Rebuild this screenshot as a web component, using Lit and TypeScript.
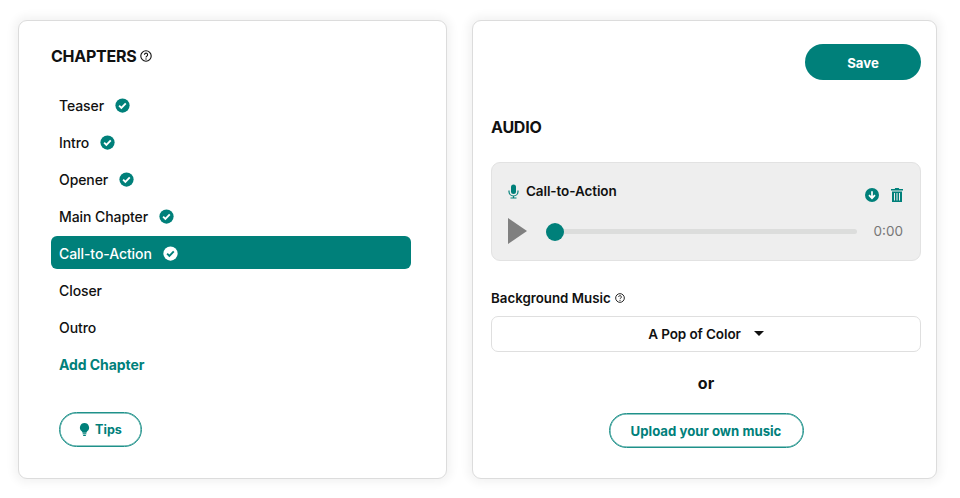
import { LitElement, html, css, svg } from 'lit';
import { customElement } from 'lit/decorators.js';

const chapters = ['Teaser', 'Intro', 'Opener', 'Main Chapter', 'Call-to-Action', 'Closer', 'Outro'];
const ACTIVE = 'Call-to-Action';

const check = html`<svg class="check" viewBox="0 0 16 16">
  <circle cx="8" cy="8" r="7.6" fill="currentColor"></circle>
  <path class="tick" d="M4.4 8.2l2.4 2.4 4.7-4.8" fill="none" stroke-width="2"></path>
</svg>`;

const help = (size: number) => html`<svg width=${size} height=${size} viewBox="0 0 12 12" fill="none" stroke="#111">
  <circle cx="6" cy="6" r="5.2" stroke-width="1.1"></circle>
  <path d="M4.4 4.8a1.6 1.6 0 1 1 2.5 1.3c-.6.4-.9.7-.9 1.3" stroke-width="1.1"></path>
  ${svg`<circle cx="6" cy="9" r=".7" fill="#111" stroke="none"></circle>`}
</svg>`;

@customElement('app-root')
export class AppRoot extends LitElement {
  static styles = css`
    :host {
      display: block;
      width: 960px;
      height: 498px;
      background: #fff;
      font-family: Inter, "Liberation Sans", sans-serif;
      color: #111;
      overflow: hidden;
    }
    .page {
      display: flex;
      gap: 25px;
      padding: 20px 0 0 18px;
    }
    .card {
      box-sizing: border-box;
      height: 459px;
      background: #fff;
      border: 1px solid #dcdcdc;
      border-radius: 9px;
      box-shadow: 0 0 10px 4px rgba(0, 0, 0, 0.05);
    }
    .left {
      width: 429px;
      padding: 25px 35px 0 32px;
    }
    .right {
      width: 465px;
      padding: 23px 15px 0 18px;
    }
    h2 {
      margin: 0;
      display: flex;
      align-items: center;
      gap: 4px;
      font-size: 16px;
      line-height: 20px;
      font-weight: 700;
      letter-spacing: -0.25px;
    }
    ul {
      list-style: none;
      margin: 22px 0 0;
      padding: 0;
      display: flex;
      flex-direction: column;
      gap: 4px;
    }
    li {
      box-sizing: border-box;
      height: 33px;
      display: flex;
      align-items: center;
      gap: 11px;
      padding: 1px 0 0 8px;
      border-radius: 6px;
      font-size: 14px;
      font-weight: 500;
      letter-spacing: -0.08px;
      color: #111;
    }
    li .check {
      color: #00807a;
    }
    li .tick {
      stroke: #fff;
    }
    li.active {
      background: #00807a;
      color: #fff;
    }
    li.active .check {
      color: #fff;
    }
    li.active .tick {
      stroke: #00807a;
    }
    li.add {
      color: #00807a;
      font-weight: 700;
    }
    .check {
      width: 15px;
      height: 15px;
      flex: none;
    }
    .outline {
      box-sizing: border-box;
      display: inline-flex;
      align-items: center;
      justify-content: center;
      background: #fff;
      border: 1px solid #1f918a;
      box-shadow: inset 0 0 0 0.5px #1f918a;
      border-radius: 18px;
      color: #00807a;
      font: 700 13.2px Inter, "Liberation Sans", sans-serif;
      padding: 0;
    }
    .tips {
      width: 83px;
      height: 35px;
      gap: 5px;
      margin: 32px 0 0 8px;
      font-size: 12.6px;
    }
    .save-row {
      display: flex;
      justify-content: flex-end;
    }
    .save {
      width: 116px;
      height: 36px;
      border: none;
      border-radius: 18px;
      padding: 1px 0 0;
      background: #00807a;
      color: #fff;
      font: 700 13.2px Inter, "Liberation Sans", sans-serif;
    }
    .right h2 {
      margin-top: 37px;
    }
    .player {
      box-sizing: border-box;
      height: 99px;
      margin-top: 25px;
      padding: 19px 17px 0 16px;
      background: #eee;
      border: 1px solid #e2e2e2;
      border-radius: 9px;
    }
    .player-head {
      display: flex;
      align-items: center;
      height: 18px;
    }
    .player-title {
      margin-left: 7px;
      flex: 1;
      font-size: 13.5px;
      font-weight: 600;
      letter-spacing: -0.1px;
    }
    .actions {
      display: flex;
      align-items: center;
      gap: 12px;
      margin-top: 7px;
    }
    .controls {
      display: flex;
      align-items: center;
      margin-top: 17px;
      height: 28px;
    }
    .play {
      width: 19px;
      height: 26px;
      flex: none;
    }
    .track {
      flex: 1;
      height: 5px;
      margin-left: 19px;
      position: relative;
      background: #dcdddc;
      border-radius: 3px;
    }
    .thumb {
      position: absolute;
      left: 0;
      top: -6px;
      width: 18px;
      height: 18px;
      border-radius: 50%;
      background: #00807a;
    }
    .time {
      width: 46px;
      text-align: right;
      font-size: 13.5px;
      color: #777;
    }
    .label {
      display: flex;
      align-items: center;
      gap: 4px;
      margin-top: 28px;
      font-size: 13.3px;
      line-height: 18px;
      font-weight: 600;
    }
    .select {
      box-sizing: border-box;
      height: 36px;
      margin-top: 9px;
      display: flex;
      align-items: center;
      justify-content: center;
      gap: 13px;
      border: 1px solid #dfdfdf;
      border-radius: 7px;
      font-size: 13.5px;
      font-weight: 600;
      letter-spacing: -0.1px;
    }
    .caret {
      width: 0;
      height: 0;
      border-left: 5.5px solid transparent;
      border-right: 5.5px solid transparent;
      border-top: 5.5px solid #111;
      margin: 0 0 2px 0;
    }
    .or {
      margin-top: 20px;
      text-align: center;
      font-size: 16px;
      line-height: 22px;
      font-weight: 700;
    }
    .upload-row {
      display: flex;
      justify-content: center;
      margin-top: 19px;
    }
    .upload {
      width: 195px;
      height: 35px;
    }
  `;

  render() {
    return html`
      <div class="page">
        <section class="card left">
          <h2>CHAPTERS ${help(12)}</h2>
          <ul>
            ${chapters.map(
              (c, i) => html`<li class=${c === ACTIVE ? 'active' : ''}>
                ${c}${i < 5 ? check : ''}
              </li>`
            )}
            <li class="add">Add Chapter</li>
          </ul>
          <button class="outline tips">
            <svg width="11" height="15" viewBox="0 0 12 15" fill="#00807a">
              <path d="M6 .5a5 5 0 0 0-3 9c.5.4.8 1 .8 1.5h4.4c0-.5.3-1.1.8-1.5a5 5 0 0 0-3-9z"></path>
              <rect x="3.8" y="11.6" width="4.4" height="1.2" rx=".5"></rect>
              <rect x="4.4" y="13.3" width="3.2" height="1.2" rx=".5"></rect>
            </svg>
            Tips
          </button>
        </section>
        <section class="card right">
          <div class="save-row"><button class="save">Save</button></div>
          <h2>AUDIO</h2>
          <div class="player">
            <div class="player-head">
              <svg width="11" height="15" viewBox="0 0 11 15">
                <rect x="3" y="0.5" width="5" height="9.5" rx="2.5" fill="#00807a"></rect>
                <path d="M1 6.5v1a4.5 4.5 0 0 0 9 0v-1M5.5 12v1.8M2.5 14h6" fill="none" stroke="#00807a" stroke-width="1.2"></path>
              </svg>
              <span class="player-title">Call-to-Action</span>
              <div class="actions">
                <svg width="14" height="14" viewBox="0 0 14 14">
                  <circle cx="7" cy="7" r="7" fill="#00807a"></circle>
                  <path d="M7 3.2v6.8M4 7.2l3 3 3-3" fill="none" stroke="#fff" stroke-width="1.7"></path>
                </svg>
                <svg width="12" height="14" viewBox="0 0 12 14" fill="#00807a">
                  <path d="M4.2 0h3.6l.5 1H12v1.4H0V1h3.7z"></path>
                  <path fill-rule="evenodd" d="M1 3.4h10V14H1zM3 5v7.4h1V5zM5.5 5v7.4h1V5zM8 5v7.4h1V5z"></path>
                </svg>
              </div>
            </div>
            <div class="controls">
              <svg class="play" viewBox="0 0 19 26"><path d="M0 0l19 13L0 26z" fill="#808080"></path></svg>
              <div class="track"><div class="thumb"></div></div>
              <span class="time">0:00</span>
            </div>
          </div>
          <div class="label">Background Music ${help(10)}</div>
          <div class="select">A Pop of Color <span class="caret"></span></div>
          <div class="or">or</div>
          <div class="upload-row"><button class="outline upload">Upload your own music</button></div>
        </section>
      </div>
    `;
  }
}
